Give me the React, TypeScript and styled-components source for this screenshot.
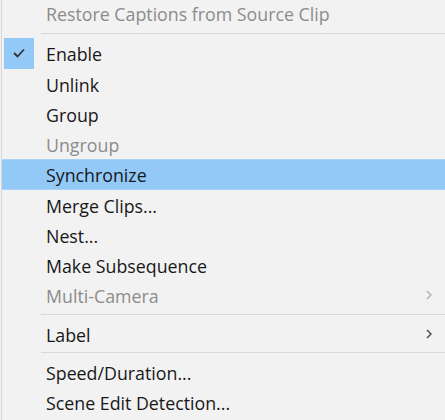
import React from 'react';
import styled, { createGlobalStyle } from 'styled-components';

const GlobalStyle = createGlobalStyle`
    html, body {
        margin: 0;
        padding: 0;
        background: #f2f2f2;
        overflow: hidden;
    }
`

interface Item {
    label: string,
    disabled?: boolean,
    checked?: boolean,
    active?: boolean,
    submenu?: boolean,
}

// null = separator
const items: (Item | null)[] = [
    { label: 'Restore Captions from Source Clip', disabled: true },
    null,
    { label: 'Enable', checked: true },
    { label: 'Unlink' },
    { label: 'Group' },
    { label: 'Ungroup', disabled: true },
    { label: 'Synchronize', active: true },
    { label: 'Merge Clips...' },
    { label: 'Nest...' },
    { label: 'Make Subsequence' },
    { label: 'Multi-Camera', disabled: true, submenu: true },
    null,
    { label: 'Label', submenu: true },
    null,
    { label: 'Speed/Duration...' },
    { label: 'Scene Edit Detection...' },
];

const Menu = styled.div`
    width: 445px;
    height: 420px;
    box-sizing: border-box;
    border-left: 1px solid #d6d6d6;
    margin-left: 1px;
    font-family: 'Open Sans', 'Noto Sans', sans-serif;
    font-size: 17.8px;
    display: flex;
    flex-direction: column;
    overflow: hidden;
`

const Row = styled.div<{ $disabled?: boolean, $active?: boolean, $first?: boolean }>`
    height: 30.25px;
    flex: none;
    display: grid;
    grid-template-columns: 30px 1fr 20px;
    column-gap: 12px;
    align-items: center;
    padding-left: 2px;
    margin-top: ${p => p.$first ? '-2px' : '0'};
    color: ${p => p.$disabled ? '#8c8c8c' : '#181818'};
    background: ${p => p.$active ? '#93c9f6' : 'transparent'};
    box-shadow: ${p => p.$active ? 'inset 0 1px 0 #a9d4f8, inset 0 -1px 0 #a9d4f8' : 'none'};
`

const CheckBox = styled.div<{ $on?: boolean }>`
    width: 30px;
    height: 30.25px;
    display: flex;
    align-items: center;
    justify-content: center;
    background: ${p => p.$on ? '#93c9f6' : 'transparent'};
`

const Text = styled.span`
    white-space: nowrap;
    line-height: 1;
    position: relative;
    top: 2px;
`

const Arrow = styled.div`
    display: flex;
    align-items: center;
`

const Separator = styled.div<{ $tall?: boolean }>`
    flex: none;
    height: ${p => p.$tall ? '10px' : '8px'};
    display: flex;
    align-items: center;
    padding-left: 39px;

    &::after {
        content: '';
        flex: 1;
        height: 1px;
        background: #d9d9d9;
    }
`

const App: React.FC = () => {
    return (
        <>
            <GlobalStyle />
            <Menu>
                {items.map((item, i) => {
                    if (item === null) {
                        return <Separator key={i} $tall={i === 1} />
                    }
                    return (
                        <Row key={i} $disabled={item.disabled} $active={item.active} $first={i === 0}>
                            <CheckBox $on={item.checked}>
                                {item.checked &&
                                    <svg width="12" height="10" viewBox="0 0 12 10">
                                        <polyline points="1,5 4.5,8.5 11,1.5" fill="none" stroke="#333" strokeWidth="1.8" />
                                    </svg>
                                }
                            </CheckBox>
                            <Text>{item.label}</Text>
                            <Arrow>
                                {item.submenu &&
                                    <svg width="6" height="10" viewBox="0 0 6 10">
                                        <polyline points="1,1 5,5 1,9" fill="none" stroke={item.disabled ? '#b0b0b0' : '#444'} strokeWidth="1.4" />
                                    </svg>
                                }
                            </Arrow>
                        </Row>
                    )
                })}
            </Menu>
        </>
    )
}

export default App;
